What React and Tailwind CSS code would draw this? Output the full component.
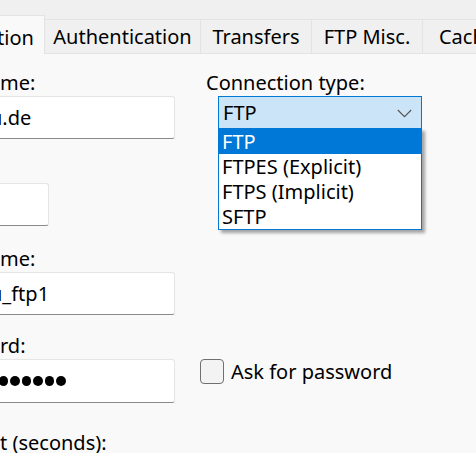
const FONT = { fontFamily: '"Noto Sans", "Open Sans", sans-serif' };

const TABS = [
  { label: "Authentication", w: "w-[156px]" },
  { label: "Transfers", w: "w-[111px]" },
  { label: "FTP Misc.", w: "w-[111px]" },
  { label: "Cache", w: "w-[90px]" },
];

const OPTIONS = ["FTP", "FTPES (Explicit)", "FTPS (Implicit)", "SFTP"];

function Field({ children, className = "" }) {
  return (
    <div
      className={`h-[43px] bg-white border border-[#e5e5e5] border-b-[#8a8a8a] rounded-[3px] flex items-center overflow-hidden ${className}`}
    >
      {children}
    </div>
  );
}

export default function App() {
  return (
    <div
      className="w-[476px] h-[453px] overflow-hidden bg-[#f9f9f9] text-black text-[20px] leading-[27px]"
      style={FONT}
    >
      {/* tab strip */}
      <div className="h-[54px] bg-[#f0f0f0] flex items-end">
        <div className="w-[45px] h-[39px] shrink-0 bg-[#f9f9f9] border-r border-t border-[#e3e3e3] flex items-center overflow-hidden pt-[4px]">
          <span className="whitespace-nowrap -ml-[3px]">tion</span>
        </div>
        <div className="flex border-b border-[#e3e3e3]">
          {TABS.map((t) => (
            <div
              key={t.label}
              className={`${t.w} shrink-0 h-[34px] border-t border-r border-[#e3e3e3] flex items-center justify-center whitespace-nowrap`}
            >
              {t.label}
            </div>
          ))}
        </div>
      </div>

      <div className="pt-[15px]">
        {/* host + connection type */}
        <div className="flex items-start">
          <div className="w-[175px] shrink-0">
            <div className="h-[27px] whitespace-nowrap">me:</div>
            <Field className="-ml-[10px] w-[185px]">
              <span className="whitespace-nowrap -ml-[1px]">u.de</span>
            </Field>
          </div>
          <div className="ml-[31px]">
            <div className="h-[27px] whitespace-nowrap">Connection type:</div>
            <div className="relative ml-[12px] w-[204px]">
              <div className="h-[33px] bg-[#cce4f7] border border-[#0078d4] flex items-center justify-between pl-[4px] pr-[9px]">
                <span>FTP</span>
                <svg width="15" height="9" viewBox="0 0 15 9" fill="none" className="mt-[1px]">
                  <path d="M0.8 1 L7.5 7.7 L14.2 1" stroke="#555" strokeWidth="1.1" />
                </svg>
              </div>
              <div className="absolute left-0 top-[32px] w-[204px] bg-white border border-[#0078d4] shadow-[3px_3px_3px_rgba(0,0,0,0.35)] z-10">
                {OPTIONS.map((o, i) => (
                  <div
                    key={o}
                    className={`h-[25px] pl-[3px] flex items-center whitespace-nowrap ${
                      i === 0 ? "bg-[#0078d7] text-white" : ""
                    }`}
                  >
                    {o}
                  </div>
                ))}
              </div>
            </div>
          </div>
        </div>

        {/* port */}
        <Field className="mt-[44px] -ml-[10px] w-[59px]" />

        {/* user */}
        <div className="mt-[19px] h-[27px] whitespace-nowrap">me:</div>
        <Field className="-ml-[10px] w-[185px]">
          <span className="whitespace-nowrap -ml-[1px]">u_ftp1</span>
        </Field>

        {/* password */}
        <div className="mt-[17px] h-[27px] whitespace-nowrap">rd:</div>
        <div className="flex items-start">
          <Field className="-ml-[10px] w-[185px] h-[44px]">
            <div className="flex gap-[2px] -ml-[4px]">
              {Array.from({ length: 7 }).map((_, i) => (
                <span key={i} className="w-[9.5px] h-[9.5px] rounded-full bg-black shrink-0" />
              ))}
            </div>
          </Field>
          <label className="ml-[25px] h-[25px] flex items-center gap-[7px]">
            <span className="w-[24px] h-[25px] rounded-[4px] border border-[#707070] bg-[#f3f3f3]" />
            <span className="whitespace-nowrap">Ask for password</span>
          </label>
        </div>

        {/* timeout */}
        <div className="mt-[26px] h-[27px] whitespace-nowrap">t (seconds):</div>
      </div>
    </div>
  );
}
